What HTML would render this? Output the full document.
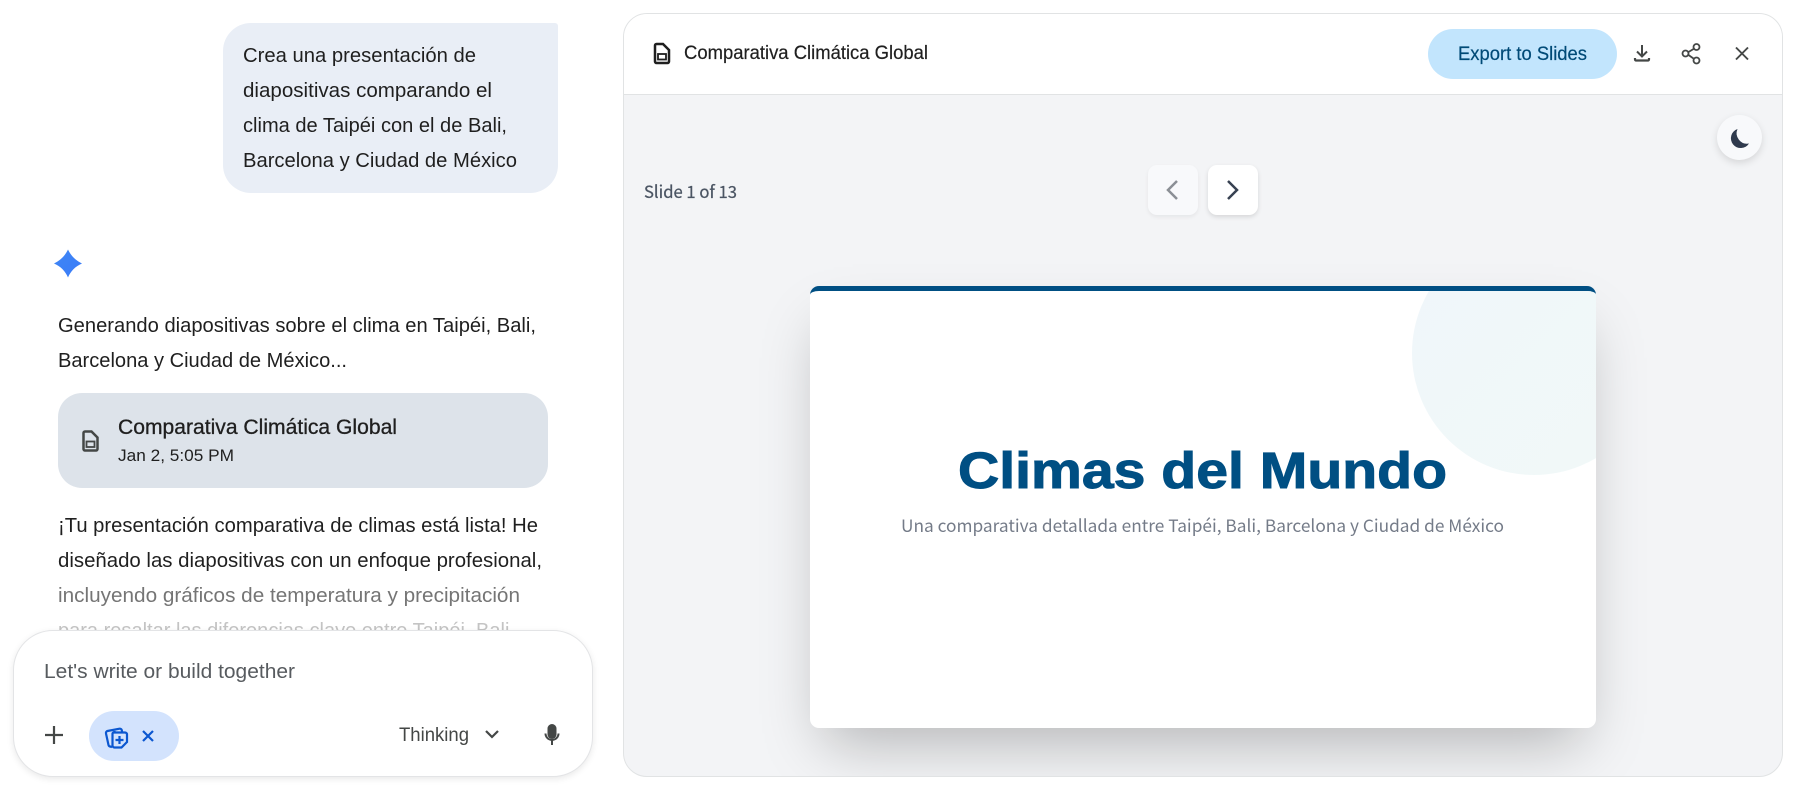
<!DOCTYPE html>
<html><head><meta charset="utf-8"><style>
html,body{margin:0;padding:0;background:#fff;width:1795px;height:788px;overflow:hidden}
.a{position:absolute;box-sizing:border-box}
svg{position:absolute;left:0;top:0;overflow:visible}
text{font-family:"Liberation Sans",sans-serif;dominant-baseline:auto}
</style></head><body>

<div class="a" style="left:223px;top:23px;width:335px;height:170px;background:#e9eef6;border-radius:28px 3px 28px 28px"></div>
<div class="a" style="left:58px;top:393px;width:490px;height:95px;background:#dde3ea;border-radius:24px"></div>

<svg width="1795" height="788" style="left:0;top:0">
<defs>
<linearGradient id="star" x1="0" y1="0" x2="1" y2="1"><stop offset="0" stop-color="#3f87f5"/><stop offset="1" stop-color="#3a7bf8"/></linearGradient>
</defs>
<g font-size="20" fill="#1f1f1f">
<text x="243" y="62" textLength="233" lengthAdjust="spacingAndGlyphs">Crea una presentación de</text>
<text x="243" y="97" textLength="249" lengthAdjust="spacingAndGlyphs">diapositivas comparando el</text>
<text x="243" y="132" textLength="264" lengthAdjust="spacingAndGlyphs">clima de Taipéi con el de Bali,</text>
<text x="243" y="167" textLength="274" lengthAdjust="spacingAndGlyphs">Barcelona y Ciudad de México</text>
<text x="58" y="332" textLength="478" lengthAdjust="spacingAndGlyphs">Generando diapositivas sobre el clima en Taipéi, Bali,</text>
<text x="58" y="367" textLength="289" lengthAdjust="spacingAndGlyphs">Barcelona y Ciudad de México...</text>
<text x="58" y="532" textLength="480" lengthAdjust="spacingAndGlyphs">¡Tu presentación comparativa de climas está lista! He</text>
<text x="58" y="567" textLength="484" lengthAdjust="spacingAndGlyphs">diseñado las diapositivas con un enfoque profesional,</text>
<text x="58" y="602" textLength="462" lengthAdjust="spacingAndGlyphs" fill="#757575">incluyendo gráficos de temperatura y precipitación</text>
<text x="58" y="637" textLength="457" lengthAdjust="spacingAndGlyphs" fill="#c4c4c4">para resaltar las diferencias clave entre Taipéi, Bali,</text>
</g>
<path d="M68 249.5C70.5 255 75 260 82 263.500C75 266.500 70.5 271.500 68 277.500C65.500 271.500 61 266.500 54 263.500C61 260 65.500 255 68 249.5Z" fill="url(#star)"/>
<text x="118" y="434" font-size="21" textLength="279" lengthAdjust="spacingAndGlyphs" fill="#1f1f1f" stroke="#1f1f1f" stroke-width=".3">Comparativa Climática Global</text>
<text x="118" y="461" font-size="17" textLength="116" lengthAdjust="spacingAndGlyphs" fill="#1f1f1f">Jan 2, 5:05 PM</text>
<g fill="none" stroke="#444746">
<path d="M85 431.500h6.500l6 6v11.500a1.500 1.500 0 0 1-1.500 1.500H85a1.500 1.500 0 0 1-1.500-1.500v-16a1.500 1.500 0 0 1 1.500-1.500Z" stroke-width="2.500"/>
<rect x="86.500" y="441.500" width="8" height="5.500" stroke-width="1.800"/>
</g>
</svg>

<!-- Input box -->
<div class="a" style="left:13px;top:630px;width:580px;height:147px;background:#fff;border:1px solid #e3e4e6;border-radius:40px;box-shadow:0 2px 7px rgba(0,0,0,.09)"></div>
<div class="a" style="left:89px;top:711px;width:90px;height:50px;background:#d3e3fd;border-radius:25px"></div>

<!-- Right panel -->
<div class="a" style="left:623px;top:13px;width:1160px;height:764px;border:1px solid #e1e3e4;border-radius:24px;background:#f3f4f6;overflow:hidden">
  <div class="a" style="left:0;top:0;width:1158px;height:81px;background:#fff;border-bottom:1px solid #e1e3e4"></div>
  <div class="a" style="left:804px;top:15px;width:189px;height:50px;background:#c2e5fd;border-radius:25px"></div>
  <div class="a" style="left:1093px;top:101px;width:45px;height:45px;background:#f8f9fb;border-radius:50%;box-shadow:0 3px 8px rgba(0,0,0,.12)"></div>
  <div class="a" style="left:524px;top:151px;width:50px;height:50px;background:#f8f9fb;border-radius:9px;box-shadow:0 2px 4px rgba(0,0,0,.06)"></div>
  <div class="a" style="left:584px;top:151px;width:50px;height:50px;background:#fff;border-radius:9px;box-shadow:0 2px 5px rgba(0,0,0,.12)"></div>
  <div class="a" style="left:186px;top:272px;width:786px;height:442px;background:#fff;border-top:5px solid #004f83;border-radius:9px;box-shadow:0 29px 57px -14px rgba(0,0,0,.26);overflow:hidden">
    <div class="a" style="left:602px;top:-60px;width:244px;height:244px;border-radius:50%;background:linear-gradient(135deg,#f0f6fa,#f1f9f8)"></div>
  </div>
</div>

<svg width="1795" height="788" style="left:0;top:0">
<text x="44" y="678" font-size="20" textLength="251" lengthAdjust="spacingAndGlyphs" fill="#575b5f">Let's write or build together</text>
<text x="399" y="741" font-size="19" textLength="70" lengthAdjust="spacingAndGlyphs" fill="#444746">Thinking</text>
<path d="M54 726v18M45 735h18" stroke="#444746" stroke-width="2.200" fill="none"/>
<g fill="none" stroke="#0b57d0" stroke-width="2.200">
<g transform="translate(0 -2)">
<path d="M112 749l-2-.5a2 2 0 0 1-1.500-1.500l-2.500-11.500a2 2 0 0 1 1.500-2.500l12-2.300a2 2 0 0 1 2.300 1.500l.4 2"/>
<path d="M114.500 734.500h10.500a2 2 0 0 1 2 2v7.500l-5.500 5.500h-7a2 2 0 0 1-2-2v-11.500a2 2 0 0 1 2-2Z" fill="#d3e3fd"/>
<path d="M119.500 738v8M115.500 742h8"/>
</g>
<path d="M143 731l10 10M153 731l-10 10"/>
</g>
<path d="M486 731l6 6 6-6" fill="none" stroke="#444746" stroke-width="2.200"/>
<g fill="#444746">
<rect x="547.500" y="724" width="9" height="15" rx="4.500"/>
<path d="M544.500 733.500h2a5.500 5.500 0 0 0 11 0h2a7.500 7.500 0 0 1-6.500 7.400V745h-2v-4.100a7.500 7.500 0 0 1-6.500-7.400Z"/>
</g>

<!-- header -->
<g fill="none" stroke="#1f1f1f">
<path d="M656.500 44h6.500l6 6v11.500a1.500 1.500 0 0 1-1.500 1.500h-11a1.500 1.500 0 0 1-1.500-1.500V45.500a1.500 1.500 0 0 1 1.500-1.500Z" stroke-width="2.500"/>
<rect x="658" y="54" width="8" height="5.500" stroke-width="1.800"/>
</g>
<text x="684" y="59" font-size="19" textLength="244" lengthAdjust="spacingAndGlyphs" fill="#1f1f1f" stroke="#1f1f1f" stroke-width=".2">Comparativa Climática Global</text>
<text x="1458" y="60" font-size="19" textLength="129" lengthAdjust="spacingAndGlyphs" fill="#004a77" stroke="#004a77" stroke-width=".2">Export to Slides</text>
<g fill="none" stroke="#444746" stroke-width="2">
<path d="M1642 45v11M1637 51.500l5 5 5-5"/>
<path d="M1635 58v1.500a1 1 0 0 0 1 1h12a1 1 0 0 0 1-1V58" stroke-width="2.200"/>
<circle cx="1696.500" cy="47" r="3" stroke-width="1.800"/><circle cx="1685.500" cy="53.500" r="3" stroke-width="1.800"/><circle cx="1696.500" cy="60.500" r="3" stroke-width="1.800"/>
<path d="M1688.500 52l5-3M1688.500 55l5 3.500" stroke-width="1.800"/>
<path d="M1736 47.500l12 12M1748 47.500l-12 12" stroke-width="1.900"/>
</g>
<path d="M1737.500 129A9.800 9.800 0 1 0 1749 143.500A10.500 10.500 0 0 1 1737.500 129Z" fill="#2f3a4d"/>
<text x="644" y="198" font-size="17" textLength="93" lengthAdjust="spacingAndGlyphs" fill="#4b5563" stroke="#4b5563" stroke-width=".25" style='font-family:"Noto Sans CJK JP","Liberation Sans",sans-serif'>Slide 1 of 13</text>
<path d="M1177 181l-9 9 9 9" fill="none" stroke="#8b8f95" stroke-width="2.500"/>
<path d="M1228 181l9 9-9 9" fill="none" stroke="#374151" stroke-width="2.500"/>

<!-- slide text -->
<text x="958" y="488" font-size="51" font-weight="700" textLength="489" lengthAdjust="spacingAndGlyphs" fill="#004f83" stroke="#004f83" stroke-width="1">Climas del Mundo</text>
<text x="901" y="532" font-size="17" textLength="603" lengthAdjust="spacingAndGlyphs" fill="#747b88" style='font-family:"Noto Sans CJK JP","Liberation Sans",sans-serif'>Una comparativa detallada entre Taipéi, Bali, Barcelona y Ciudad de México</text>
</svg>
</body></html>
